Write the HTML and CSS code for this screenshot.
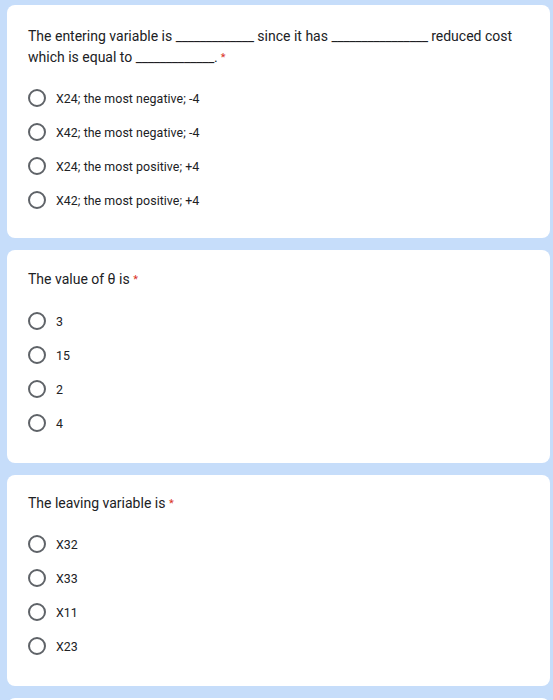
FILE: index.html
```html
<!DOCTYPE html>
<html>
<head>
<meta charset="utf-8">
<link rel="stylesheet" href="styles.css">
</head>
<body>
<div class="page">
  <div class="card card-first">
    <div class="question">The entering variable is <span class="blank">_____________</span> since it has <span class="blank">________________</span> reduced cost which is equal to <span class="blank">_____________</span>.<span class="req req-tight">*</span></div>
    <div class="options">
      <div class="option"><span class="radio"></span><span class="label">X24; the most negative; -4</span></div>
      <div class="option"><span class="radio"></span><span class="label">X42; the most negative; -4</span></div>
      <div class="option"><span class="radio"></span><span class="label">X24; the most positive; +4</span></div>
      <div class="option"><span class="radio"></span><span class="label">X42; the most positive; +4</span></div>
    </div>
  </div>
  <div class="card">
    <div class="question">The value of θ is <span class="req">*</span></div>
    <div class="options">
      <div class="option"><span class="radio"></span><span class="label">3</span></div>
      <div class="option"><span class="radio"></span><span class="label">15</span></div>
      <div class="option"><span class="radio"></span><span class="label">2</span></div>
      <div class="option"><span class="radio"></span><span class="label">4</span></div>
    </div>
  </div>
  <div class="card card-third">
    <div class="question">The leaving variable is <span class="req">*</span></div>
    <div class="options">
      <div class="option"><span class="radio"></span><span class="label">X32</span></div>
      <div class="option"><span class="radio"></span><span class="label">X33</span></div>
      <div class="option"><span class="radio"></span><span class="label">X11</span></div>
      <div class="option"><span class="radio"></span><span class="label">X23</span></div>
    </div>
  </div>
  <div class="card card-cut"></div>
</div>
</body>
</html>
```
FILE: styles.css
```css
html, body {
  margin: 0;
  padding: 0;
  background: #c6ddfa;
  height: 700px;
  overflow: hidden;
}
.page {
  display: flex;
  flex-direction: column;
  gap: 12px;
  padding: 5px 3px 0 7px;
  font-family: Roboto, "Liberation Sans", sans-serif;
  color: #202124;
}
.card {
  background: #ffffff;
  border-radius: 8px;
  padding: 19px 20px 23px 21px;
}
.card-cut {
  height: 60px;
}
.question {
  font-size: 14px;
  line-height: 21px;
}
.card-first {
  padding-bottom: 21px;
}
.card-first .question {
  padding-top: 2px;
}
.card-first .options {
  margin-top: 13px;
}
.card-third {
  padding-top: 18px;
}
.card-third .options {
  margin-top: 13px;
}
.blank {
  letter-spacing: -0.3px;
}
.req {
  color: #d93025;
  font-size: 11px;
  vertical-align: top;
}
.req-tight {
  margin-left: 3px;
}
.options {
  margin-top: 14px;
  display: flex;
  flex-direction: column;
}
.option {
  display: flex;
  align-items: center;
  height: 34px;
  font-size: 12.4px;
  letter-spacing: 0.05px;
}
.radio {
  width: 14px;
  height: 14px;
  border: 2px solid #5f6368;
  border-radius: 50%;
  flex: none;
}
.label {
  margin-left: 10px;
}
```
